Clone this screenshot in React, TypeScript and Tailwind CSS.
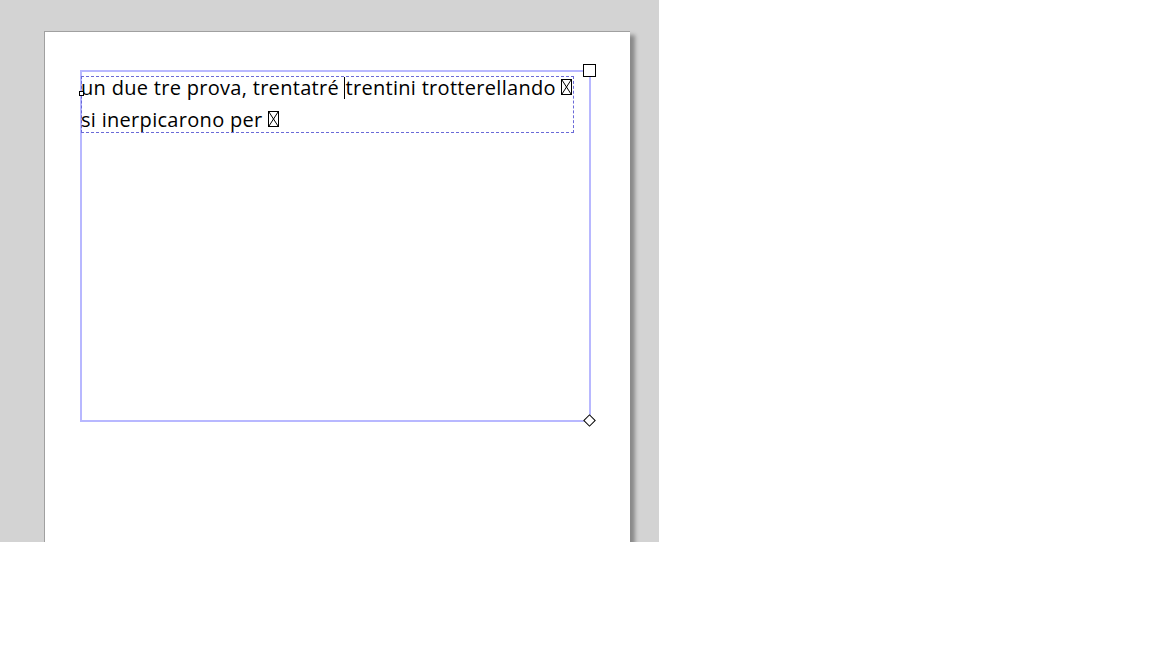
import React from "react";

function Tofu() {
  return (
    <span className="inline-block relative align-baseline w-[11px] h-[16px] border border-black">
      <svg className="absolute inset-0" width="9" height="14" viewBox="0 0 9 14">
        <line x1="0" y1="0" x2="9" y2="14" stroke="black" strokeWidth="1" />
        <line x1="9" y1="0" x2="0" y2="14" stroke="black" strokeWidth="1" />
      </svg>
    </span>
  );
}

export default function App() {
  return (
    <div className="w-[1152px] h-[648px] bg-white">
      <div className="w-[659px] h-[542px] bg-[#d3d3d3] overflow-hidden pl-[44px] pt-[31px]">
        <div className="w-[586px] h-[600px] bg-white border-l border-t border-[#a0a0a0] shadow-[5px_4px_4px_rgba(0,0,0,0.35)] pl-[35px] pt-[38px]">
          <div className="relative w-[511px] h-[352px] border-2 border-[#b8b8ff]">
            <div
              className="-ml-[1px] mt-[4px] w-[493px] h-[57px] border border-dashed border-[#6a6ad8] text-black text-[20px] leading-[32px] tracking-[0.3px]"
              style={{ fontFamily: "'Open Sans', Lato, sans-serif" }}
            >
              <div className="-mt-[5px] -ml-px whitespace-nowrap">
                un due tre prova, trentatré{" "}
                <span className="inline-block w-px h-[22px] bg-black align-[-4px]" />
                trentini trotterellando{" "}
                <Tofu />
              </div>
              <div className="-ml-px whitespace-nowrap">
                si inerpicarono per{" "}
                <Tofu />
              </div>
            </div>
            <span className="absolute -left-[3px] top-[19px] w-[5px] h-[5px] border border-black bg-white" />
            <span className="absolute -right-[7px] -top-[8px] w-[13px] h-[13px] border border-black bg-white" />
            <span className="absolute -right-[5px] -bottom-[5px] w-[9px] h-[9px] border border-black bg-white rotate-45" />
          </div>
        </div>
      </div>
    </div>
  );
}
